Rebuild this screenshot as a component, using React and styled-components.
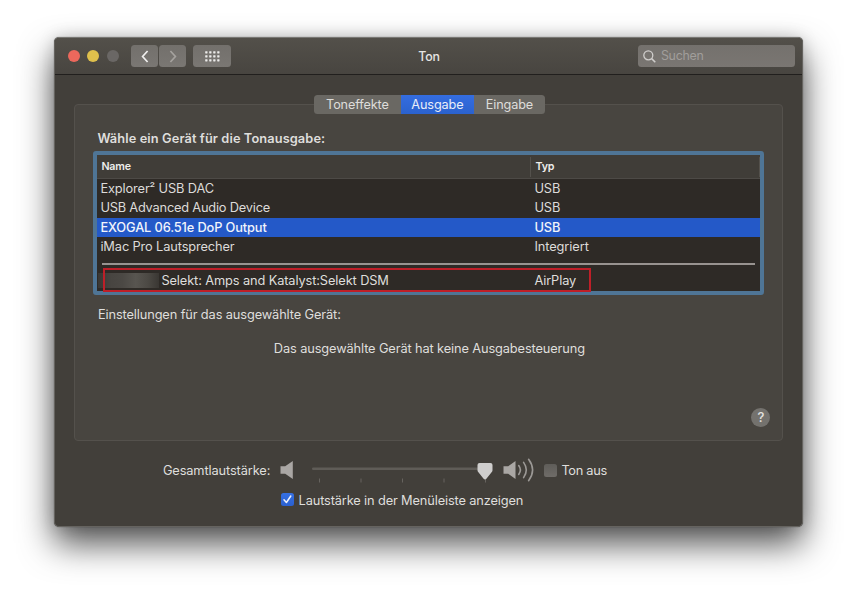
import React from 'react';
import styled, { createGlobalStyle } from 'styled-components';

const GlobalStyle = createGlobalStyle`
  * { box-sizing: border-box; }
  html, body { margin: 0; background: #fff; }
  body {
    font-family: Inter, 'Liberation Sans', sans-serif;
    font-size: 12.8px;
    letter-spacing: -0.12px;
    line-height: 20px;
    color: #dfdedc;
    white-space: nowrap;
  }
`;

const Desktop = styled.main`
  height: 599px;
  padding: 37px 54.6px 72px 54.4px;
  overflow: hidden;
`;

const Window = styled.section`
  height: 490px;
  display: flex;
  flex-direction: column;
  overflow: hidden;
  border: 1px solid #65635f;
  border-top-color: #797874;
  border-radius: 5px;
  background: #423f3a;
  box-shadow: 0 0 1px rgba(0, 0, 0, 0.6), 0 17px 34px rgba(0, 0, 0, 0.68), 0 0 16px rgba(0, 0, 0, 0.15);
`;

const Toolbar = styled.header`
  flex: none;
  height: 37px;
  display: grid;
  grid-template-columns: 1fr auto 1fr;
  align-items: center;
  padding: 0 7px 0 12.3px;
  background: linear-gradient(#53504a, #484540);
  border-bottom: 1px solid #211f1d;
`;

const ToolbarStart = styled.div`
  display: flex;
  align-items: center;
`;

const Lights = styled.div`
  display: flex;
  gap: 7.5px;
  margin-right: 12.5px;
`;

const Light = styled.i`
  width: 12px;
  height: 12px;
  border-radius: 50%;
  background: ${(p) => p.$color};
`;

const ToolButton = styled.button`
  width: ${(p) => p.$width}px;
  height: 22px;
  margin: 0 ${(p) => p.$gap}px 0 0;
  padding: 0;
  display: grid;
  place-items: center;
  border: 0;
  border-radius: 3.5px;
  background: linear-gradient(#73706c, #7a7773);
`;

const Title = styled.h1`
  margin: 0 5px 0 0;
  padding-top: 1px;
  font-size: 12.4px;
  font-weight: 500;
  letter-spacing: -0.1px;
  color: #e6e5e3;
`;

const Search = styled.div`
  justify-self: end;
  width: 157px;
  height: 22px;
  display: flex;
  align-items: center;
  gap: 4.5px;
  padding-left: 5px;
  border-radius: 3.5px;
  background: linear-gradient(#74716d, #7a7672);
  color: #a19e9b;
  font-size: 12.4px;
  letter-spacing: -0.25px;
`;

const Content = styled.div`
  flex: 1;
  display: flex;
  flex-direction: column;
  padding: 20px 19px 0;
`;

const Tabs = styled.nav`
  position: relative;
  align-self: center;
  display: flex;
  height: 19px;
  margin: 0 0 -10px 1px;
  border-radius: 3.5px;
  overflow: hidden;
`;

const Tab = styled.button`
  width: ${(p) => p.$width}px;
  padding: 0;
  border: 0;
  font: inherit;
  font-size: 12.7px;
  line-height: 19px;
  letter-spacing: -0.14px;
  color: ${(p) => (p.$active ? '#e8edf8' : '#deddda')};
  background: ${(p) => (p.$active ? 'linear-gradient(#346de0, #2b62ce)' : '#6a6863')};
`;

const Group = styled.section`
  height: 337px;
  padding: 23px 18px 0 18px;
  border: 1px solid #54514c;
  border-radius: 4px;
  background: #484540;
`;

const Heading = styled.h2`
  margin: 0 0 1px 4px;
  font-size: 12.8px;
  line-height: 22px;
  font-weight: 600;
  letter-spacing: 0.1px;
`;

const Table = styled.div`
  width: 671px;
  height: 144px;
  border: 4px solid #4f7596;
  border-radius: 3px;
  background: #2e2a26;
`;

const TableHead = styled.div`
  height: 23.6px;
  display: grid;
  grid-template-columns: 434px 1fr;
  background: #403d38;
  border-bottom: 1px solid #4d4a46;
  font-size: 10.7px;
  font-weight: 600;
  letter-spacing: -0.15px;
  color: #eeedeb;
`;

const HeadCell = styled.div`
  margin: 2px 0 1px;
  padding-left: 4px;
  line-height: 19px;
  border-right: 1px solid #54514c;
`;

const Row = styled.div`
  height: 19.6px;
  display: grid;
  grid-template-columns: 434px 1fr;
  align-items: center;
  padding-left: 3px;
  line-height: 20px;
  color: ${(p) => (p.$selected ? '#f1f4fb' : '#dddbd9')};
  background: ${(p) => (p.$selected ? '#2459c8' : 'transparent')};
`;

const NameText = styled.span`
  font-weight: ${(p) => (p.$selected ? 500 : 400)};
  letter-spacing: ${(p) => (p.$tight ? -0.2 : -0.12)}px;
`;

const TypeText = styled.span`
  font-weight: ${(p) => (p.$selected ? 500 : 400)};
  letter-spacing: -0.08px;
`;

const Divider = styled.hr`
  height: 2px;
  margin: 6px 5px 3px;
  border: 0;
  background: #989390;
`;

const Highlighted = styled.div`
  position: relative;
  height: 24px;
  display: grid;
  grid-template-columns: 61px 373px 1fr;
  align-items: center;
  padding: 1px 0 0 3px;
  line-height: 21px;
  letter-spacing: -0.11px;
`;

const Redacted = styled.span`
  height: 15px;
  margin: 0 2px 0 -2px;
  background: linear-gradient(90deg, #3a3733, #484541 22%, #4b4844 40%, #585550 62%, #4c4944 82%, #3a3733);
`;

const RedFrame = styled.span`
  position: absolute;
  left: 6px;
  top: 0;
  width: 488px;
  height: 24px;
  border: 2px solid #be1f28;
`;

const Settings = styled.div`
  margin: 10px 0 0 4.5px;
`;

const Message = styled.p`
  margin: 14px 0 49px;
  text-align: center;
  padding-left: 1px;
`;

const Help = styled.button`
  width: 19px;
  height: 19px;
  margin: 0 -6px 0 auto;
  padding: 0;
  display: block;
  border: 0;
  border-radius: 50%;
  background: #74726e;
  color: #e3e2e0;
  font: 500 13px/19px Inter, sans-serif;
`;

const Volume = styled.div`
  height: 30px;
  margin-top: 14px;
  display: flex;
  align-items: center;
  padding-left: 88.5px;
`;

const Label = styled.span`
  width: ${(p) => p.$width}px;
  padding-top: 2px;
  letter-spacing: ${(p) => p.$spacing}px;
`;

const Drawing = styled.svg`
  display: block;
  flex: none;
  overflow: visible;
  margin-right: ${(p) => p.$gap || 0}px;
`;

const Check = styled.span`
  width: 13px;
  height: 13px;
  margin-right: ${(p) => p.$gap}px;
  display: grid;
  place-items: center;
  border-radius: 2.5px;
  background: ${(p) => (p.$on ? 'linear-gradient(#3670e2, #2a60d0)' : 'linear-gradient(#5f5d59, #6f6c68)')};
`;

const MenuBarOption = styled.div`
  height: 29px;
  display: flex;
  align-items: center;
  padding-left: 206.7px;
`;

const devices = [
  { name: 'Explorer² USB DAC', type: 'USB' },
  { name: 'USB Advanced Audio Device', type: 'USB', tight: true },
  { name: 'EXOGAL 06.51e DoP Output', type: 'USB', selected: true },
  { name: 'iMac Pro Lautsprecher', type: 'Integriert' },
];

function Chevron({ back }) {
  return (
    <Drawing width="8" height="13" viewBox="0 0 8 13">
      <path
        d={back ? 'M6.6 1 1.6 6.5l5 5.5' : 'M1.4 1l5 5.5-5 5.5'}
        fill="none"
        stroke={back ? '#f0efee' : '#a5a29e'}
        strokeWidth="1.7"
      />
    </Drawing>
  );
}

function GridIcon() {
  return (
    <Drawing width="15" height="11" viewBox="0 0 15 11">
      {[0, 4, 8].map((y) =>
        [0, 4, 8, 12].map((x) => (
          <rect key={`${x}-${y}`} x={x + 0.2} y={y + 0.2} width="2.3" height="2.3" rx=".4" fill="#ecebea" />
        ))
      )}
    </Drawing>
  );
}

function Slider() {
  return (
    <Drawing width="182" height="30" viewBox="0 0 182 30" $gap={9}>
      <rect x="0" y="12.4" width="176" height="2.6" rx="1.3" fill="#5f5c57" />
      {[7.5, 49, 90.5, 132, 173.5].map((x) => (
        <path key={x} d={`M${x} 23.5v4`} stroke="#66635e" />
      ))}
      <path d="M167.5 8h11q2 0 2 2v5.2q0 1-.7 1.9l-5.4 6.7q-1.4 1.6-2.8 0l-5.4-6.7q-.7-.9-.7-1.9V10q0-2 2-2z" fill="#cfcecd" />
    </Drawing>
  );
}

export default function App() {
  return (
    <Desktop>
      <GlobalStyle />
      <Window>
        <Toolbar>
          <ToolbarStart>
            <Lights>
              <Light $color="#ec685c" />
              <Light $color="#dfc04c" />
              <Light $color="#6a6765" />
            </Lights>
            <ToolButton $width={27} $gap={1} aria-label="Zurück"><Chevron back /></ToolButton>
            <ToolButton $width={27} $gap={7} aria-label="Vorwärts"><Chevron /></ToolButton>
            <ToolButton $width={38} $gap={0} aria-label="Alle einblenden"><GridIcon /></ToolButton>
          </ToolbarStart>
          <Title>Ton</Title>
          <Search>
            <Drawing width="13" height="13" viewBox="0 0 13 13">
              <circle cx="5.3" cy="5.3" r="4.5" fill="none" stroke="#d0cecc" strokeWidth="1.3" />
              <path d="M8.6 8.6l3.7 3.7" stroke="#d0cecc" strokeWidth="1.5" />
            </Drawing>
            Suchen
          </Search>
        </Toolbar>
        <Content>
          <Tabs>
            <Tab $width={87}>Toneffekte</Tab>
            <Tab $width={73} $active>Ausgabe</Tab>
            <Tab $width={71}>Eingabe</Tab>
          </Tabs>
          <Group>
            <Heading>Wähle ein Gerät für die Tonausgabe:</Heading>
            <Table>
              <TableHead>
                <HeadCell>Name</HeadCell>
                <HeadCell>Typ</HeadCell>
              </TableHead>
              {devices.map((d) => (
                <Row key={d.name} $selected={d.selected}>
                  <NameText $selected={d.selected} $tight={d.tight}>{d.name}</NameText>
                  <TypeText $selected={d.selected}>{d.type}</TypeText>
                </Row>
              ))}
              <Divider />
              <Highlighted>
                <Redacted />
                <span>Selekt: Amps and Katalyst:Selekt DSM</span>
                <span>AirPlay</span>
                <RedFrame />
              </Highlighted>
            </Table>
            <Settings>Einstellungen für das ausgewählte Gerät:</Settings>
            <Message>Das ausgewählte Gerät hat keine Ausgabesteuerung</Message>
            <Help>?</Help>
          </Group>
          <Volume>
            <Label $width={117} $spacing={-0.12}>Gesamtlautstärke:</Label>
            <Drawing width="14" height="18" viewBox="0 0 14 18" $gap={18}>
              <path d="M.5 5.2h4.7L12.8 0v18L5.2 12.8H.5z" fill="#aaa7a4" />
            </Drawing>
            <Slider />
            <Drawing width="32" height="24" viewBox="0 0 32 24" $gap={9}>
              <path d="M.5 8.2h4.7L12.5 3v18l-7.3-5.2H.5z" fill="#aaa7a4" />
              <path d="M15.7 7.6q3.4 4.4 0 8.8M20.6 4.4q5.4 7.6 0 15.2M25.6 1.3q8 10.7 0 21.4" fill="none" stroke="#9c9996" strokeWidth="1.6" strokeLinecap="round" />
            </Drawing>
            <Check $gap={4.5} />
            <Label $width={60} $spacing={-0.3}>Ton aus</Label>
          </Volume>
          <MenuBarOption>
            <Check $on $gap={4.5}>
              <Drawing width="9" height="9" viewBox="0 0 9 9">
                <path d="M1 4.8l2.4 2.7L7.8 1" fill="none" stroke="#eef2fb" strokeWidth="1.5" strokeLinecap="round" strokeLinejoin="round" />
              </Drawing>
            </Check>
            <Label $width={240} $spacing={-0.14}>Lautstärke in der Menüleiste anzeigen</Label>
          </MenuBarOption>
        </Content>
      </Window>
    </Desktop>
  );
}
